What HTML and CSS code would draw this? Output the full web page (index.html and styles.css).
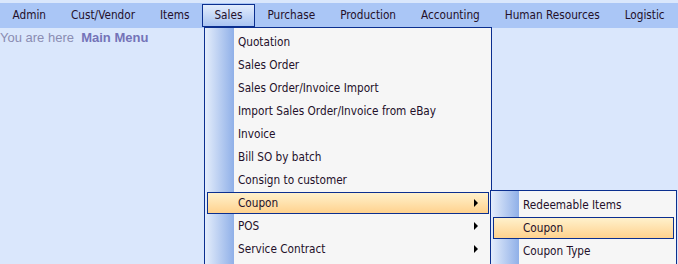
FILE: index.html
```html
<!DOCTYPE html>
<html lang="en">
<head>
  <meta charset="UTF-8" />
  <title>Main Menu</title>
  <link rel="stylesheet" href="styles.css">
</head>
<body>
  <div class="menubar">
    <a>Admin</a>
    <a>Cust/Vendor</a>
    <a>Items</a>
    <a class="open">Sales</a>
    <a>Purchase</a>
    <a>Production</a>
    <a>Accounting</a>
    <a>Human Resources</a>
    <a>Logistic</a>
  </div>

  <div class="breadcrumb">You are here&nbsp; <b>Main Menu</b></div>

  <div class="dropdown sales-menu">
    <div class="item">Quotation</div>
    <div class="item">Sales Order</div>
    <div class="item">Sales Order/Invoice Import</div>
    <div class="item">Import Sales Order/Invoice from eBay</div>
    <div class="item">Invoice</div>
    <div class="item">Bill SO by batch</div>
    <div class="item">Consign to customer</div>
    <div class="item hover has-sub">Coupon<span class="arrow"></span></div>
    <div class="item has-sub">POS<span class="arrow"></span></div>
    <div class="item has-sub">Service Contract<span class="arrow"></span></div>
  </div>

  <div class="dropdown coupon-menu">
    <div class="item">Redeemable Items</div>
    <div class="item hover">Coupon</div>
    <div class="item">Coupon Type</div>
  </div>
</body>
</html>
```

FILE: styles.css
```css
html, body {
  overflow: hidden;
}

body {
  margin: 0;
  background: #dae7fc;
  font-family: "DejaVu Sans Condensed", "DejaVu Sans", sans-serif;
  font-stretch: condensed;
  font-size: 11.7px;
  color: #24102a;
}

.menubar {
  display: flex;
  margin-top: 3px;
  height: 24px;
  padding-top: 1px;
  background: #aac6f6;
}

.menubar a {
  padding: 0 11.5px;
  height: 21px;
  line-height: 21px;
  border: 1px solid transparent;
  cursor: default;
}

.menubar a.open {
  border-color: #0b2f8f;
  background: linear-gradient(to bottom, #e2ecfc, #a9c4f2);
}

.breadcrumb {
  font-family: "Liberation Sans", Arial, sans-serif;
  font-stretch: normal;
  font-size: 13px;
  color: #8a8cb2;
  padding-top: 2px;
}

.breadcrumb b {
  color: #7473b8;
}

.dropdown {
  position: absolute;
  background: linear-gradient(to right, #e4edfb, #90b0e8) no-repeat 0 0 / 29px 100%, #f6f6f6;
  border: 1px solid #0b2f8f;
  padding: 3px 0 12px;
}

.sales-menu {
  left: 204px;
  top: 27px;
  width: 286px;
}

.coupon-menu {
  left: 490px;
  top: 190px;
  width: 185px;
  background-size: 28px 100%, auto;
}

.item {
  display: flex;
  align-items: center;
  height: 20px;
  margin: 0 2px 1px;
  padding-left: 30px;
  border: 1px solid transparent;
  white-space: nowrap;
}

.coupon-menu .item {
  padding-left: 29px;
}

.item.hover {
  border-color: #0b2f8f;
  background: linear-gradient(to bottom, #fff1cc, #ffd28e);
}

.arrow {
  margin-left: auto;
  margin-right: 10px;
  border-left: 4px solid #000;
  border-top: 4px solid transparent;
  border-bottom: 4px solid transparent;
}
```
